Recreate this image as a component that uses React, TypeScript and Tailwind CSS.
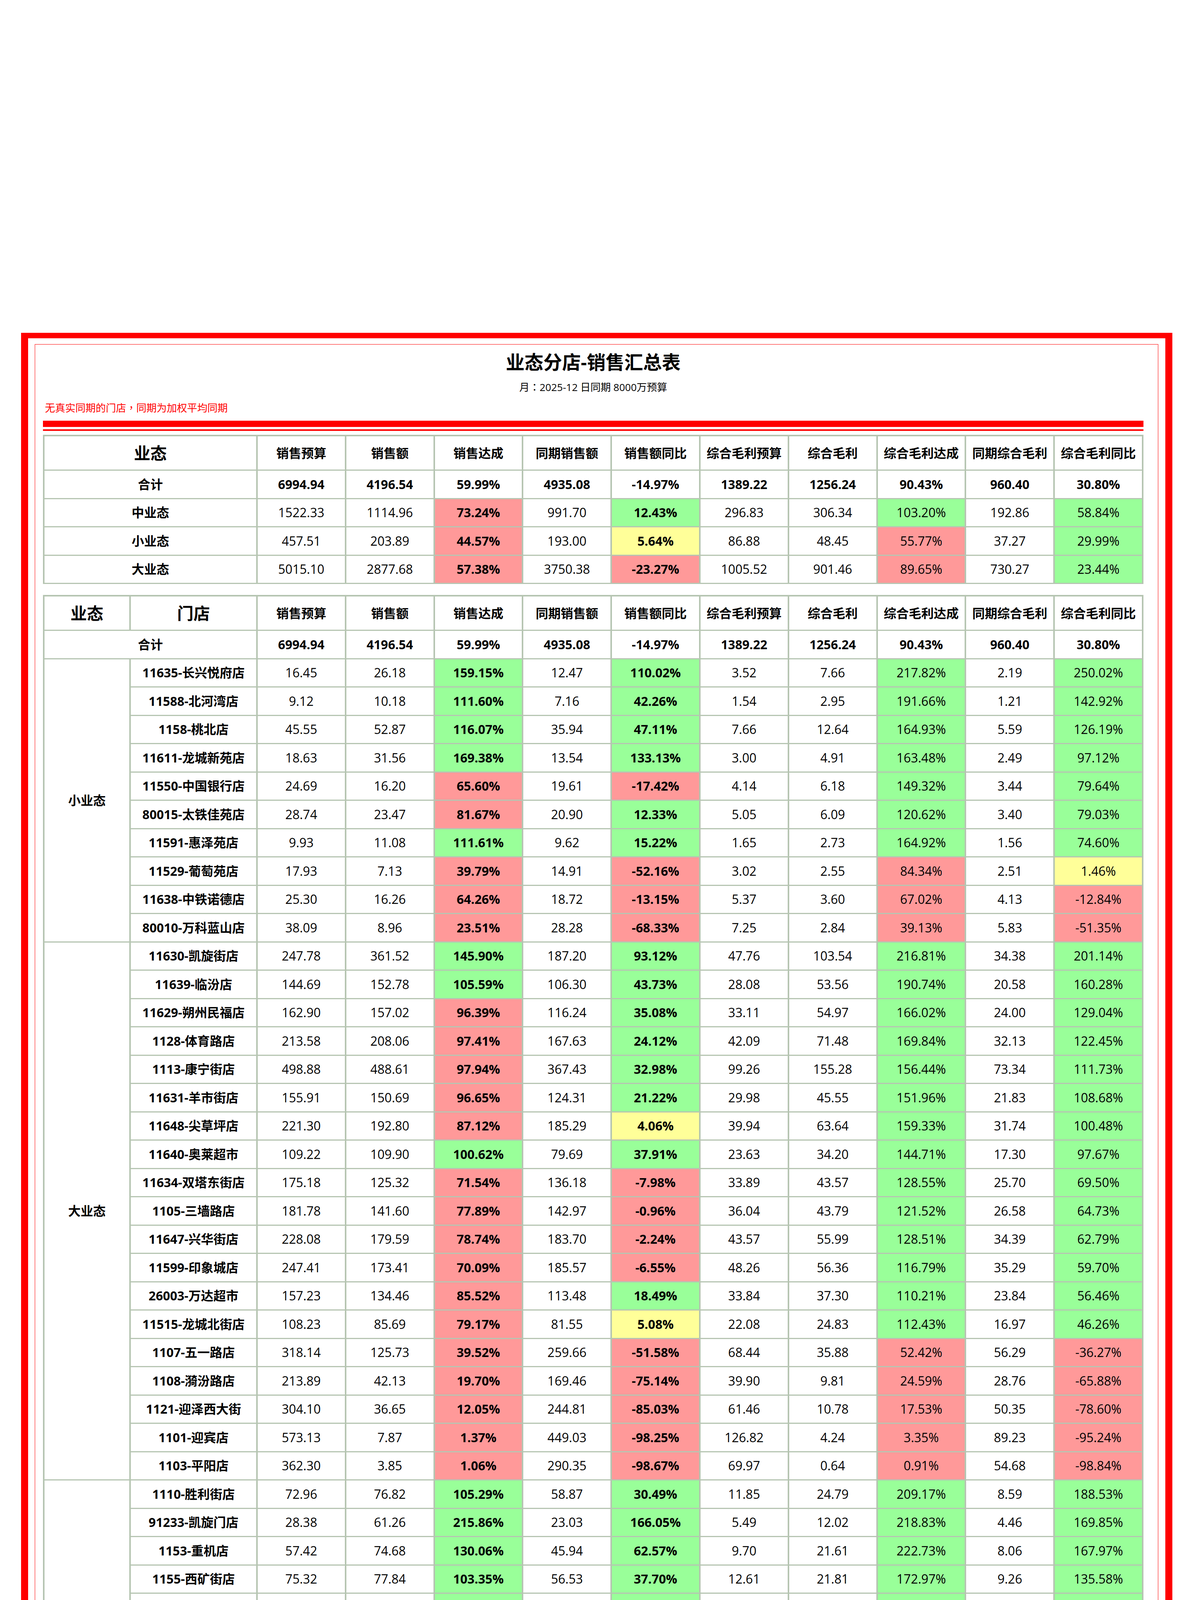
import React from "react";

const HEAD = ["销售预算", "销售额", "销售达成", "同期销售额", "销售额同比", "综合毛利预算", "综合毛利", "综合毛利达成", "同期综合毛利", "综合毛利同比"];

const TOTAL = ["6994.94", "4196.54", "59.99%", "4935.08", "-14.97%", "1389.22", "1256.24", "90.43%", "960.40", "30.80%"];

const SUMMARY: [string, string[]][] = [
  ["中业态", ["1522.33", "1114.96", "73.24%", "991.70", "12.43%", "296.83", "306.34", "103.20%", "192.86", "58.84%"]],
  ["小业态", ["457.51", "203.89", "44.57%", "193.00", "5.64%", "86.88", "48.45", "55.77%", "37.27", "29.99%"]],
  ["大业态", ["5015.10", "2877.68", "57.38%", "3750.38", "-23.27%", "1005.52", "901.46", "89.65%", "730.27", "23.44%"]],
];

type Group = { name: string; rows: [string, string[]][] };

const GROUPS: Group[] = [
  {
    name: "小业态",
    rows: [
      ["11635-长兴悦府店", ["16.45", "26.18", "159.15%", "12.47", "110.02%", "3.52", "7.66", "217.82%", "2.19", "250.02%"]],
      ["11588-北河湾店", ["9.12", "10.18", "111.60%", "7.16", "42.26%", "1.54", "2.95", "191.66%", "1.21", "142.92%"]],
      ["1158-桃北店", ["45.55", "52.87", "116.07%", "35.94", "47.11%", "7.66", "12.64", "164.93%", "5.59", "126.19%"]],
      ["11611-龙城新苑店", ["18.63", "31.56", "169.38%", "13.54", "133.13%", "3.00", "4.91", "163.48%", "2.49", "97.12%"]],
      ["11550-中国银行店", ["24.69", "16.20", "65.60%", "19.61", "-17.42%", "4.14", "6.18", "149.32%", "3.44", "79.64%"]],
      ["80015-太铁佳苑店", ["28.74", "23.47", "81.67%", "20.90", "12.33%", "5.05", "6.09", "120.62%", "3.40", "79.03%"]],
      ["11591-惠泽苑店", ["9.93", "11.08", "111.61%", "9.62", "15.22%", "1.65", "2.73", "164.92%", "1.56", "74.60%"]],
      ["11529-葡萄苑店", ["17.93", "7.13", "39.79%", "14.91", "-52.16%", "3.02", "2.55", "84.34%", "2.51", "1.46%"]],
      ["11638-中铁诺德店", ["25.30", "16.26", "64.26%", "18.72", "-13.15%", "5.37", "3.60", "67.02%", "4.13", "-12.84%"]],
      ["80010-万科蓝山店", ["38.09", "8.96", "23.51%", "28.28", "-68.33%", "7.25", "2.84", "39.13%", "5.83", "-51.35%"]],
    ],
  },
  {
    name: "大业态",
    rows: [
      ["11630-凯旋街店", ["247.78", "361.52", "145.90%", "187.20", "93.12%", "47.76", "103.54", "216.81%", "34.38", "201.14%"]],
      ["11639-临汾店", ["144.69", "152.78", "105.59%", "106.30", "43.73%", "28.08", "53.56", "190.74%", "20.58", "160.28%"]],
      ["11629-朔州民福店", ["162.90", "157.02", "96.39%", "116.24", "35.08%", "33.11", "54.97", "166.02%", "24.00", "129.04%"]],
      ["1128-体育路店", ["213.58", "208.06", "97.41%", "167.63", "24.12%", "42.09", "71.48", "169.84%", "32.13", "122.45%"]],
      ["1113-康宁街店", ["498.88", "488.61", "97.94%", "367.43", "32.98%", "99.26", "155.28", "156.44%", "73.34", "111.73%"]],
      ["11631-羊市街店", ["155.91", "150.69", "96.65%", "124.31", "21.22%", "29.98", "45.55", "151.96%", "21.83", "108.68%"]],
      ["11648-尖草坪店", ["221.30", "192.80", "87.12%", "185.29", "4.06%", "39.94", "63.64", "159.33%", "31.74", "100.48%"]],
      ["11640-奥莱超市", ["109.22", "109.90", "100.62%", "79.69", "37.91%", "23.63", "34.20", "144.71%", "17.30", "97.67%"]],
      ["11634-双塔东街店", ["175.18", "125.32", "71.54%", "136.18", "-7.98%", "33.89", "43.57", "128.55%", "25.70", "69.50%"]],
      ["1105-三墙路店", ["181.78", "141.60", "77.89%", "142.97", "-0.96%", "36.04", "43.79", "121.52%", "26.58", "64.73%"]],
      ["11647-兴华街店", ["228.08", "179.59", "78.74%", "183.70", "-2.24%", "43.57", "55.99", "128.51%", "34.39", "62.79%"]],
      ["11599-印象城店", ["247.41", "173.41", "70.09%", "185.57", "-6.55%", "48.26", "56.36", "116.79%", "35.29", "59.70%"]],
      ["26003-万达超市", ["157.23", "134.46", "85.52%", "113.48", "18.49%", "33.84", "37.30", "110.21%", "23.84", "56.46%"]],
      ["11515-龙城北街店", ["108.23", "85.69", "79.17%", "81.55", "5.08%", "22.08", "24.83", "112.43%", "16.97", "46.26%"]],
      ["1107-五一路店", ["318.14", "125.73", "39.52%", "259.66", "-51.58%", "68.44", "35.88", "52.42%", "56.29", "-36.27%"]],
      ["1108-漪汾路店", ["213.89", "42.13", "19.70%", "169.46", "-75.14%", "39.90", "9.81", "24.59%", "28.76", "-65.88%"]],
      ["1121-迎泽西大街", ["304.10", "36.65", "12.05%", "244.81", "-85.03%", "61.46", "10.78", "17.53%", "50.35", "-78.60%"]],
      ["1101-迎宾店", ["573.13", "7.87", "1.37%", "449.03", "-98.25%", "126.82", "4.24", "3.35%", "89.23", "-95.24%"]],
      ["1103-平阳店", ["362.30", "3.85", "1.06%", "290.35", "-98.67%", "69.97", "0.64", "0.91%", "54.68", "-98.84%"]],
    ],
  },
  {
    name: "中业态",
    rows: [
      ["1110-胜利街店", ["72.96", "76.82", "105.29%", "58.87", "30.49%", "11.85", "24.79", "209.17%", "8.59", "188.53%"]],
      ["91233-凯旋门店", ["28.38", "61.26", "215.86%", "23.03", "166.05%", "5.49", "12.02", "218.83%", "4.46", "169.85%"]],
      ["1153-重机店", ["57.42", "74.68", "130.06%", "45.94", "62.57%", "9.70", "21.61", "222.73%", "8.06", "167.97%"]],
      ["1155-西矿街店", ["75.32", "77.84", "103.35%", "56.53", "37.70%", "12.61", "21.81", "172.97%", "9.26", "135.58%"]],
      ["11601-龙康南街店", ["99.66", "112.96", "113.34%", "78.36", "44.15%", "20.35", "34.15", "167.82%", "15.85", "115.50%"]],
      ["86601-阳光汾河湾", ["92.91", "96.22", "103.55%", "71.99", "33.65%", "19.04", "29.32", "153.95%", "14.36", "104.08%"]],
      ["1152-南内环店", ["52.21", "49.66", "95.13%", "42.60", "16.59%", "9.25", "14.82", "160.22%", "7.60", "95.06%"]],
      ["11501-星河湾店", ["142.55", "150.33", "105.46%", "102.50", "46.66%", "34.09", "42.50", "124.68%", "25.08", "69.42%"]],
      ["1118-榆次顺城街", ["75.17", "60.08", "79.92%", "57.91", "3.75%", "13.02", "17.37", "133.44%", "10.32", "68.28%"]],
      ["1180-许坦东街店", ["72.44", "47.08", "64.99%", "56.13", "-16.12%", "13.85", "14.08", "101.71%", "9.97", "41.22%"]],
      ["1154-丽华苑店", ["62.79", "64.04", "101.99%", "48.18", "32.90%", "13.33", "14.00", "104.99%", "10.45", "33.96%"]],
      ["11527-吴家堡店", ["28.66", "24.96", "87.09%", "21.44", "16.43%", "5.15", "5.04", "97.81%", "3.85", "30.66%"]],
      ["11538-紫林路店", ["70.11", "47.62", "67.92%", "51.63", "-7.78%", "15.43", "13.66", "88.52%", "11.36", "20.25%"]],
      ["11573-中环北张店", ["142.78", "77.63", "54.37%", "103.50", "-24.99%", "30.93", "23.87", "77.16%", "22.44", "6.37%"]],
      ["1181-龙山大街店", ["66.67", "30.65", "45.98%", "53.41", "-42.61%", "12.56", "6.05", "48.19%", "9.63", "-37.18%"]],
      ["1172-产业路店", ["41.08", "18.47", "44.97%", "29.59", "-37.57%", "8.42", "3.91", "46.46%", "6.23", "-37.20%"]],
      ["1189-和平南路店", ["112.60", "44.66", "39.66%", "90.08", "-50.42%", "20.06", "9.39", "46.80%", "15.27", "-38.53%"]],
    ],
  },
];

const CELL = "flex items-center justify-center border-r-4 border-b-[3px] border-[#b6c5b2] text-[32px] leading-none text-black whitespace-nowrap";

function colorFor(idx: number, val: string): string {
  const n = parseFloat(val);
  if (idx === 2 || idx === 7) return n >= 100 ? "bg-[#99ff99]" : "bg-[#ff9999]";
  if (idx === 4 || idx === 9) {
    if (n < 0) return "bg-[#ff9999]";
    if (n < 10) return "bg-[#ffff99]";
    return "bg-[#99ff99]";
  }
  return "bg-white";
}

function ValueCells({ vals, total }: { vals: string[]; total?: boolean }) {
  return (
    <>
      {vals.map((v, i) => (
        <div
          key={i}
          className={`${CELL} ${total ? "bg-white font-bold" : colorFor(i, v)} ${!total && (i === 2 || i === 4) ? "font-bold" : ""}`}
        >
          {v}
        </div>
      ))}
    </>
  );
}

function HeadCells() {
  return (
    <>
      {HEAD.map((h) => (
        <div key={h} className={`${CELL} bg-white font-bold`}>
          {h}
        </div>
      ))}
    </>
  );
}

function SummaryTable() {
  return (
    <div className="grid w-[2818px] grid-cols-[546px_repeat(10,226.8px)] grid-rows-[88px] auto-rows-[72.5px] border-t-4 border-l-4 border-[#b6c5b2]">
      <div className={`${CELL} bg-white font-bold text-[42px]`}>业态</div>
      <HeadCells />
      <div className={`${CELL} bg-white font-bold`}>合计</div>
      <ValueCells vals={TOTAL} total />
      {SUMMARY.map(([name, vals]) => (
        <React.Fragment key={name}>
          <div className={`${CELL} bg-white font-bold`}>{name}</div>
          <ValueCells vals={vals} />
        </React.Fragment>
      ))}
    </div>
  );
}

const SPAN: Record<string, string> = {
  小业态: "row-span-[10]",
  大业态: "row-span-[19]",
  中业态: "row-span-[17]",
};

function DetailTable() {
  return (
    <div className="grid w-[2818px] grid-cols-[221px_325px_repeat(10,226.8px)] grid-rows-[88px] auto-rows-[72.5px] border-t-4 border-l-4 border-[#b6c5b2]">
      <div className={`${CELL} bg-white font-bold text-[42px]`}>业态</div>
      <div className={`${CELL} bg-white font-bold text-[42px]`}>门店</div>
      <HeadCells />
      <div className={`${CELL} col-span-2 bg-white font-bold`}>合计</div>
      <ValueCells vals={TOTAL} total />
      {GROUPS.map((g) => (
        <React.Fragment key={g.name}>
          <div className={`${CELL} ${SPAN[g.name]} bg-white font-bold`}>{g.name}</div>
          {g.rows.map(([store, vals]) => (
            <React.Fragment key={store}>
              <div className={`${CELL} bg-white font-bold`}>{store}</div>
              <ValueCells vals={vals} />
            </React.Fragment>
          ))}
        </React.Fragment>
      ))}
    </div>
  );
}

export default function App() {
  return (
    <div className="bg-white pt-[852px] pb-[40px] font-['Open_Sans','Noto_Sans_CJK_SC',sans-serif]">
      <div className="ml-[54px] w-[2948px] border-x-[18px] border-y-[14px] border-[#ff0000] pl-[17px] pr-[18px] py-[15px]">
        <div className="border border-[#ff0000] pl-[20px] pb-[12px]">
          <div className="w-[2818px]">
            <div className="mt-[21px] text-center text-[48px] font-bold leading-[48px] text-black">业态分店-销售汇总表</div>
            <div className="mt-[27px] text-center font-['Open_Sans','Noto_Sans_CJK_TC',sans-serif] text-[26px] leading-[26px] text-black">月：2025-12 日同期 8000万预算</div>
            <div className="mt-[27px] ml-[5px] font-['Open_Sans','Noto_Sans_CJK_TC',sans-serif] text-[26px] leading-[26px] text-[#ff0000]">无真实同期的门店，同期为加权平均同期</div>
            <div className="mt-[20px] h-[16px] bg-[#ff0000]" />
            <div className="mt-[6px] h-[4px] bg-[#ff0000]" />
            <div className="mt-[10px]">
              <SummaryTable />
            </div>
            <div className="mt-[28px]">
              <DetailTable />
            </div>
            <div className="h-[1px] bg-[#ff0000]" />
            <div className="mt-[5px] h-[3px] bg-[#ff0000]" />
          </div>
        </div>
      </div>
    </div>
  );
}
